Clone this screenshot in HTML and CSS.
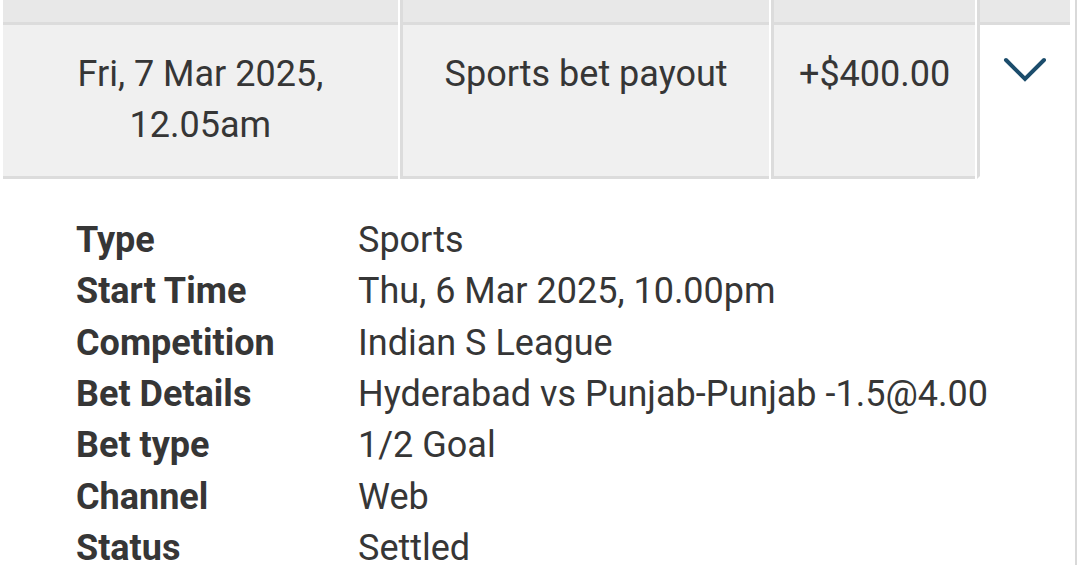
FILE: index.html
```html
<!DOCTYPE html>
<html>
  <head>
    <meta charset="UTF-8" />
    <meta name="viewport" content="width=device-width, initial-scale=1.0" />
    <link rel="stylesheet" href="styles.css">
  </head>
  <body>
    <main class="history">
      <table class="tx-table">
        <colgroup>
          <col class="col-date" />
          <col class="col-desc" />
          <col class="col-amount" />
          <col class="col-toggle" />
        </colgroup>
        <tr class="head-row">
          <td></td>
          <td></td>
          <td></td>
          <td></td>
        </tr>
        <tr class="tx-row">
          <td>Fri, 7 Mar 2025, 12.05am</td>
          <td>Sports bet payout</td>
          <td>+$400.00</td>
          <td class="toggle open">
            <svg class="chevron" width="44" height="26" viewBox="0 0 44 26">
              <polyline points="3,3 22,22 41,3" fill="none" stroke="#1c4d6c" stroke-width="4" stroke-linecap="round" />
            </svg>
          </td>
        </tr>
      </table>
      <div class="details">
        <div class="label">Type</div>
        <div class="value">Sports</div>
        <div class="label">Start Time</div>
        <div class="value">Thu, 6 Mar 2025, 10.00pm</div>
        <div class="label">Competition</div>
        <div class="value">Indian S League</div>
        <div class="label">Bet Details</div>
        <div class="value">Hyderabad vs Punjab-Punjab -1.5@4.00</div>
        <div class="label">Bet type</div>
        <div class="value">1/2 Goal</div>
        <div class="label">Channel</div>
        <div class="value">Web</div>
        <div class="label">Status</div>
        <div class="value">Settled</div>
      </div>
    </main>
  </body>
</html>
```

FILE: styles.css
```css
* {
  box-sizing: border-box;
}
body {
  margin: 0;
  font-family: Roboto, "Noto Sans", sans-serif;
  color: #363636;
  background-color: white;
}
.history {
  width: 1077px;
  height: 565px;
  overflow: hidden;
  border-right: 2px solid #d9d9d9;
  padding-left: 1px;
  padding-right: 3px;
}
.tx-table {
  table-layout: fixed;
  border-collapse: separate;
  border-spacing: 2px 0;
  width: 1071px;
  font-size: 36px;
  line-height: 51.4px;
}
.col-date {
  width: 394px;
}
.col-desc {
  width: 369px;
}
.col-amount {
  width: 203px;
}
.col-toggle {
  width: 93px;
}
td {
  padding: 24px 10px;
  text-align: center;
  vertical-align: top;
  background-color: #f0f0f0;
  border-left: 3px solid #dcdcdc;
  border-bottom: 3px solid #dcdcdc;
}
td:first-child {
  border-left: none;
}
.head-row td {
  height: 25px;
  padding: 0;
  background-color: #e8e8e8;
}
.toggle {
  padding: 32px 0 0 0;
}
.toggle.open {
  background-color: white;
  border-bottom-color: white;
}
.chevron {
  display: block;
  margin: 0 auto;
}
.details {
  display: grid;
  grid-template-columns: 282px 1fr;
  padding: 36px 0 0 75px;
  font-size: 36px;
  line-height: 51.4px;
}
.label {
  font-weight: 700;
}
```
